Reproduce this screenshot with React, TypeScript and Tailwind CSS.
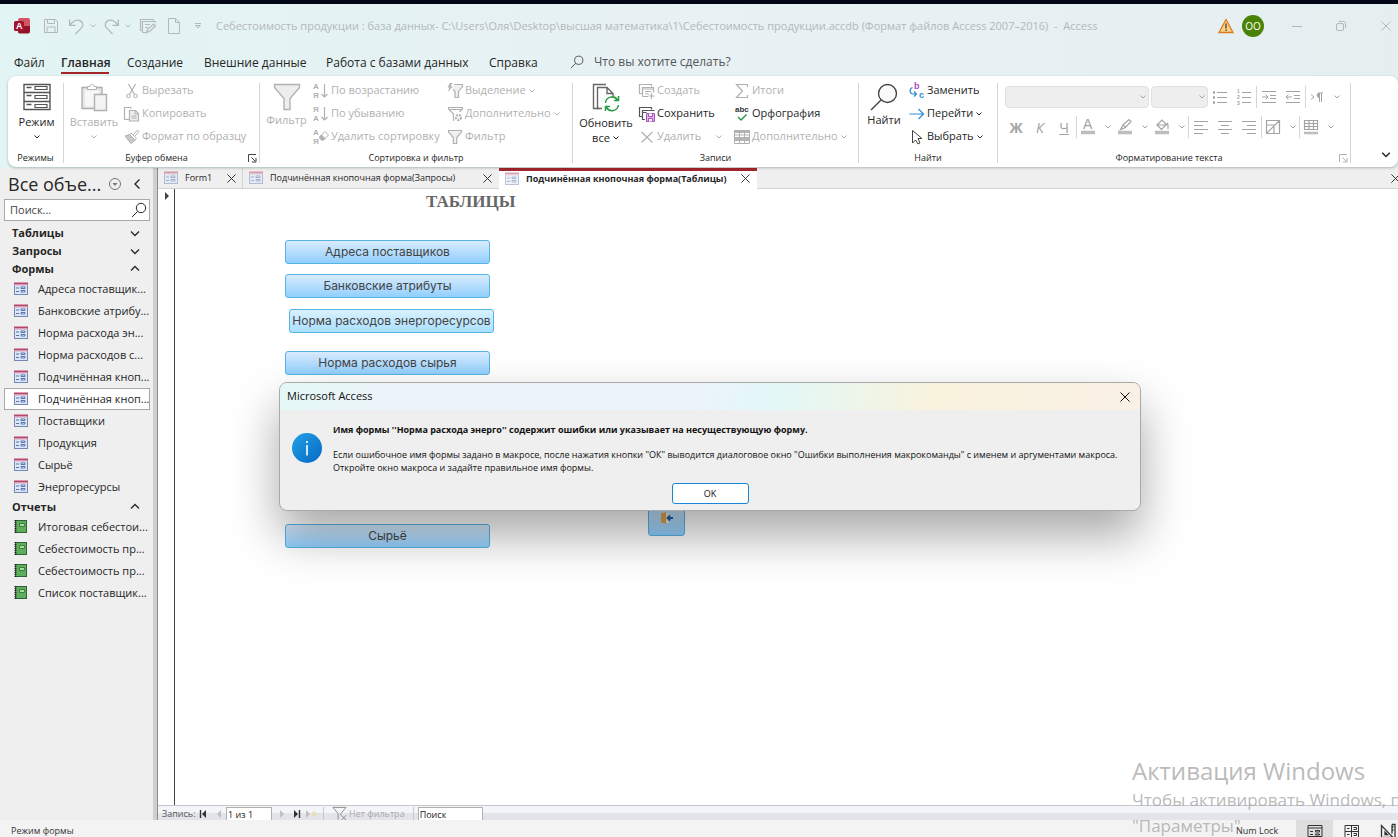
import type { ReactNode } from "react";

type IconProps = { children: ReactNode; box?: number; className?: string };

function Svg({ children, box = 16, className = "size-4" }: IconProps) {
  return (
    <svg
      viewBox={`0 0 ${box} ${box}`}
      fill="none"
      stroke="currentColor"
      strokeWidth={1}
      className={`shrink-0 overflow-visible font-['Liberation_Sans',sans-serif] ${className}`}
      aria-hidden="true"
    >
      {children}
    </svg>
  );
}

function Chevron({ className = "size-2" }: { className?: string }) {
  return (
    <Svg box={8} className={className}>
      <path d="M1.5 2.5 4 5l2.5-2.5" />
    </Svg>
  );
}

function Cross({ className = "size-3" }: { className?: string }) {
  return (
    <Svg box={12} className={className}>
      <path d="m1.5 1.5 9 9M10.5 1.5l-9 9" />
    </Svg>
  );
}

function Launcher({ className }: { className: string }) {
  return (
    <button type="button" aria-label="Параметры группы" className={className}>
      <Svg box={10} className="size-[10px]">
        <path d="M1.5 9V1.500H9M4.500 4.500l4 4M9 5v4H5" />
      </Svg>
    </button>
  );
}

function Magnifier({ className }: { className: string }) {
  return (
    <Svg className={className}>
      <circle cx="10" cy="6" r="4.700" />
      <path d="M6.600 9.400 1 15" />
    </Svg>
  );
}

function SortLetters({ top, bottom }: { top: string; bottom: string }) {
  return (
    <g fill="currentColor" stroke="none" fontSize="8" fontWeight="600">
      <text x="0" y="6">{top}</text>
      <text x="0" y="15">{bottom}</text>
    </g>
  );
}

const icons = {
  save: (
    <Svg>
      <path d="M1.500 1.500h11l2 2v11h-13zM4.500 1.500v4h7v-4M4 14.500V9h8v5.500" />
    </Svg>
  ),
  undo: (
    <Svg className="size-[17px]">
      <path d="M1.500 1.500v5.500H7M1.800 6.800C4 3.500 8 .800 11.500 2.500c3.600 2.300 2.800 5.500.5 7.500L7 15" strokeWidth="1.200" />
    </Svg>
  ),
  redo: (
    <Svg className="size-[17px]">
      <path d="M14.500 1.500v5.500H9M14.200 6.800C12 3.500 8 .800 4.500 2.500c-3.600 2.300-2.800 5.500-.5 7.500L9 15" strokeWidth="1.200" />
    </Svg>
  ),
  design: (
    <Svg>
      <path d="M2.500 12.500H.500v-11h13v1M2.500 14.500v-11h13v1M5 6.500h5M5 9.500h3M2.500 14.500H6M6.500 14.500l1-3 6-5.500 2 2-6 5.500z" strokeWidth="1.200" />
    </Svg>
  ),
  page: (
    <Svg>
      <path d="M2.500.500h7l4 4v11h-11zM9.500.500v4h4" />
    </Svg>
  ),
  cut: (
    <Svg>
      <path d="M4.500 1l6 10.500M11.500 1l-6 10.500" strokeWidth="1.200" />
      <circle cx="4.500" cy="13" r="1.800" />
      <circle cx="11.500" cy="13" r="1.800" />
    </Svg>
  ),
  copy: (
    <Svg>
      <path d="M5.500 13.500h-5v-12h6l1 1" strokeWidth="1.200" />
      <path d="M5.500 4.500h6l3 3v7.500h-9z" fill="#eee" strokeWidth="1.200" />
      <path d="M11 4.500V8h3.500M7.500 10h5M7.500 12h5" />
    </Svg>
  ),
  painter: (
    <Svg>
      <path d="m9.500 5.500 4-4.500L15 2.500l-4 4.500M7 4l5.500 5.500L11 11 5.500 5.500z" />
      <path d="M5.500 5.500 1 7l6 7.500L11 11z" fill="#c8c8c8" />
    </Svg>
  ),
  sortAsc: (
    <Svg>
      <SortLetters top="А" bottom="Я" />
      <path d="M11.500 1v13M8.500 11l3 3 3-3" strokeWidth="1.200" />
    </Svg>
  ),
  sortDesc: (
    <Svg>
      <SortLetters top="Я" bottom="А" />
      <path d="M11.500 1v13M8.500 11l3 3 3-3" strokeWidth="1.200" />
    </Svg>
  ),
  sortClear: (
    <Svg>
      <SortLetters top="А" bottom="Я" />
      <path d="m7 7.500 5-5 3.500 3.500-5 5H8.500L7 9.500z" />
      <path d="m8.500 6 3.500 3.500-1.500 1.500H8.500L7 9.500v-2z" fill="currentColor" />
    </Svg>
  ),
  selection: (
    <Svg>
      <path d="M7 1.500h8.500v2L11.500 8.500v6h-3.500v-6L6 6.500" fill="#f0f0f0" strokeWidth="1.200" />
      <path d="M3 0 .500 4.500h2L.500 9l5.500-5.500H3.500L5.500 0z" fill="currentColor" stroke="none" />
    </Svg>
  ),
  advanced: (
    <Svg>
      <path d="M7 14.500h-.500V8l-5-5V1.500h14V3l-3 3M1.500 3.500h14" strokeWidth="1.200" />
      <circle cx="11.500" cy="11.500" r="2.500" strokeWidth="2.200" strokeDasharray="2 1" />
    </Svg>
  ),
  funnelSmall: (
    <Svg>
      <path d="M1.500 1.500h13v1.600L9.700 8.500v6h-3.400v-6L1.500 3.100z" fill="#f0f0f0" strokeWidth="1.200" />
    </Svg>
  ),
  create: (
    <Svg>
      <path d="M3 10.500H.500v-9h12v2M3.500 13.500v-9h11v5M3.500 13.500H9M3.500 6h11M6 8.500h6M6 11h4M12.500 10v6M9.500 13h6" strokeWidth="1.200" />
    </Svg>
  ),
  store: (
    <Svg>
      <path d="M3 10.500H.500v-9h12v2M6 13.500H3.500v-9h12M3.500 6.500h4" strokeWidth="1.200" stroke="#555" />
      <path d="M7.500 7.500h8v8h-8z" fill="#e3b5ea" stroke="#a94fbb" />
      <path d="M9.500 7.500v3h4v-3M9.500 15.500v-3h4v3" fill="#fff" stroke="#a94fbb" />
    </Svg>
  ),
  remove: (
    <Svg>
      <path d="m2.500 3 11 10.500M13.500 3l-11 10.500" strokeWidth="1.200" />
    </Svg>
  ),
  totals: (
    <Svg>
      <path d="M13.500 4V1.500h-11L8.500 8l-6 6.500h11V12" strokeWidth="1.200" />
    </Svg>
  ),
  spelling: (
    <Svg>
      <text x="1" y="6" fontSize="8" fontWeight="600" fill="#333" stroke="none">abc</text>
      <path d="m4 11 3 3 5.500-5.500" strokeWidth="1.500" stroke="#2c9a45" />
    </Svg>
  ),
  more: (
    <Svg>
      <path d="M.500 1.500h15v13H.500z" />
      <path d="M.500 1.500h15v2H.500zM.500 8.500h15v3H.500z" fill="#b5b5b5" />
      <path d="M.500 6h15M5.500 1.500v13M10.500 1.500v13" />
    </Svg>
  ),
  replace: (
    <Svg>
      <g fontSize="9" fontWeight="600" stroke="none">
        <text x="5" y="6" fill="#a94fbb">b</text>
        <text x="10" y="15" fill="#2a8dd4">c</text>
      </g>
      <path d="M3.500 4.500C.300 5.500.300 10 3.500 11h4M5 8.500 7.500 11 5 13.500" strokeWidth="1.200" stroke="#2a8dd4" />
    </Svg>
  ),
  goTo: (
    <Svg className="size-4 text-[#2a8dd4]">
      <path d="M.500 8h14M9.500 3l5 5-5 5" strokeWidth="1.200" />
    </Svg>
  ),
  pick: (
    <Svg>
      <path d="M3.500 1.500v12.500l3-3 2.500 4 2-1-2-4.500h4z" stroke="#444" />
    </Svg>
  ),
};

type CommandProps = { icon: ReactNode; label: string; enabled?: boolean; arrow?: string };

function Command({ icon, label, enabled = false, arrow }: CommandProps) {
  return (
    <button
      type="button"
      disabled={!enabled}
      className={`flex h-[23px] items-center gap-[2px] whitespace-nowrap text-[11px] ${
        enabled ? "text-[#262626]" : "text-[#b1b1b1]"
      }`}
    >
      {icon}
      <span>{label}</span>
      {arrow && <Chevron className={arrow} />}
    </button>
  );
}

type GroupProps = { title: string; className: string; launcher?: string; children: ReactNode };

function Group({ title, className, launcher, children }: GroupProps) {
  return (
    <section className={`flex shrink-0 flex-col ${className}`}>
      <div className="flex h-[71px] items-start">{children}</div>
      <div className="flex h-4 items-center px-[2px] text-[9px] text-[#262626]">
        <h3 className="flex-1 whitespace-nowrap text-center">{title}</h3>
        {launcher && <Launcher className={launcher} />}
      </div>
    </section>
  );
}

function GroupLine() {
  return <div className="my-1 w-px shrink-0 bg-[#d6d6d6]" />;
}

function ToolLine() {
  return <div className="h-[22px] w-px shrink-0 bg-[#d6d6d6]" />;
}

function Tool({ label, children }: { label: string; children: ReactNode }) {
  return (
    <button type="button" disabled aria-label={label} className="flex h-6 w-6 items-center justify-center">
      {children}
    </button>
  );
}

function SplitTool({ label, children }: { label: string; children: ReactNode }) {
  return (
    <button type="button" disabled aria-label={label} className="flex h-6 w-[37px] items-center gap-1 pl-[3px]">
      {children}
      <Chevron className="ml-1 size-2" />
    </button>
  );
}

const menuTabs = [
  { label: "Файл", width: "w-[29px]" },
  { label: "Главная", width: "w-12", active: true },
  { label: "Создание", width: "w-[59px]" },
  { label: "Внешние данные", width: "w-[104px]" },
  { label: "Работа с базами данных", width: "w-[145px]" },
  { label: "Справка", width: "w-12" },
];

function TitleBar() {
  return (
    <header className="flex h-11 shrink-0 items-center text-[#b4b8ba]">
      <div className="flex w-[216px] shrink-0 items-center pl-[14px]">
        <Svg className="size-4">
          <rect x="4" y="0" width="12" height="15" rx="2" fill="#d0566a" stroke="none" />
          <path d="M4 8h12v5c0 1.500-.700 2.500-2 2.500H6c-1.300 0-2-.700-2-2z" fill="#94132b" stroke="none" />
          <rect x="0" y="3" width="10" height="10" rx="1.500" fill="#a4122c" stroke="none" />
          <text x="2" y="11" fontSize="9" fontWeight="700" fill="#fff" stroke="none">A</text>
        </Svg>
        <button type="button" aria-label="Сохранить" className="ml-[13px]">{icons.save}</button>
        <button type="button" aria-label="Отменить" className="ml-[9px] flex items-center gap-1">
          {icons.undo}
          <Chevron />
        </button>
        <button type="button" aria-label="Вернуть" className="ml-[6px] flex items-center gap-1">
          {icons.redo}
          <Chevron />
        </button>
        <button type="button" aria-label="Режим макета" className="ml-2">{icons.design}</button>
        <button type="button" aria-label="Создать" className="ml-[10px]">{icons.page}</button>
        <button type="button" aria-label="Настройка панели" className="ml-3">
          <Svg box={8} className="size-2">
            <path d="M1 1.500h6M1.500 3.500 4 6l2.500-2.500z" />
          </Svg>
        </button>
      </div>
      <h1 className="flex-1 truncate text-[11px]">
        Себестоимость продукции : база данных- C:\Users\Оля\Desktop\высшая математика\1\Себестоимость
        продукции.accdb (Формат файлов Access 2007–2016) &nbsp;-&nbsp; Access
      </h1>
      <Svg className="size-4">
        <path d="M8 1.500 15 14.500H1z" fill="#fbd08b" stroke="#e07b1a" strokeWidth="1.300" />
        <path d="M8 5.500v5M8 11.500v1.500" stroke="#333" strokeWidth="1.200" />
      </Svg>
      <span className="ml-2 flex size-[22px] items-center justify-center rounded-full bg-[#498205] text-[10px] text-white">
        OO
      </span>
      <div className="ml-7 flex items-center gap-[34px] pr-[6px]">
        <button type="button" aria-label="Свернуть">
          <Svg box={10} className="size-[10px]"><path d="M0 5.500h10" /></Svg>
        </button>
        <button type="button" aria-label="Свернуть в окно">
          <Svg box={10} className="size-[10px]">
            <rect x=".5" y="2.500" width="7" height="7" rx="1.500" />
            <path d="M3 .500h4.500a2 2 0 0 1 2 2V7" />
          </Svg>
        </button>
        <button type="button" aria-label="Закрыть">
          <Cross />
        </button>
      </div>
    </header>
  );
}

function MenuBar() {
  return (
    <nav className="flex h-7 shrink-0 items-center pl-[14px] text-[12px] text-[#262626]">
      <div className="flex gap-[18px]">
        {menuTabs.map((tab) => (
          <a
            key={tab.label}
            href="#"
            className={`flex h-6 whitespace-nowrap border-b-2 pt-[2px] leading-[22px] ${tab.width} ${
              tab.active ? "border-[#a4262c] font-semibold" : "border-transparent"
            }`}
          >
            {tab.label}
          </a>
        ))}
      </div>
      <label className="ml-[33px] flex flex-1 items-center gap-[10px] text-[#444]">
        <Magnifier className="size-[14px]" />
        <input
          type="text"
          aria-label="Помощник"
          placeholder="Что вы хотите сделать?"
          className="w-60 bg-transparent outline-none placeholder:text-[#555]"
        />
      </label>
    </nav>
  );
}

function Ribbon() {
  return (
    <div className="relative z-10 mb-px ml-2 flex h-[91px] shrink-0 overflow-hidden rounded-lg bg-white pt-[3px] shadow-[0_1px_3px_rgba(0,0,0,0.25)]">
      <Group title="Режимы" className="w-[55px]">
        <button type="button" className="flex w-[57px] shrink-0 flex-col items-center pt-1 text-[11px] leading-[22px] text-[#262626]">
          <Svg box={28} className="size-7 text-[#555]">
            <path d="M1 1.500h26v25H1zM1 9.500h26M1 18.500h26M3.500 4.500h5M3.500 12.500h5M3.500 21.500h5" strokeWidth="1.400" />
            <path d="M12 3.500h12v3H12zM12 12.500h12v3H12zM12 21.500h12v3H12z" strokeWidth="1.200" />
          </Svg>
          Режим
          <Chevron />
        </button>
      </Group>
      <GroupLine />
      <Group title="Буфер обмена" className="w-[195px]" launcher="text-[#444]">
        <button type="button" disabled className="flex w-[60px] flex-col items-center pt-1 text-[11px] leading-[22px] text-[#b1b1b1]">
          <Svg box={28} className="size-7">
            <path d="M2 4.500h20v21H2z" fill="#e6e6e6" strokeWidth="1.400" />
            <path d="M5 7.500h14v16H5z" fill="#f7f7f7" stroke="none" />
            <path d="M7.500 6.500v-3h2.500c.500-3 3.500-3 4 0h2.500v3z" fill="#fff" />
            <path d="M14.500 11.500h12v16h-12z" fill="#f3f3f3" strokeWidth="1.400" />
          </Svg>
          Вставить
          <Chevron />
        </button>
        <div className="flex flex-col">
          <Command icon={icons.cut} label="Вырезать" />
          <Command icon={icons.copy} label="Копировать" />
          <Command icon={icons.painter} label="Формат по образцу" />
        </div>
      </Group>
      <GroupLine />
      <Group title="Сортировка и фильтр" className="w-[312px]">
        <button type="button" disabled className="flex w-[53px] flex-col items-center pt-1 text-[11px] leading-[18px] text-[#b1b1b1]">
          <Svg box={28} className="size-7">
            <path d="M1.500 1.500h25v3L17 15.500v11h-6v-11L1.500 4.500z" fill="#eee" strokeWidth="1.400" />
          </Svg>
          Фильтр
        </button>
        <div className="flex w-[134px] flex-col">
          <Command icon={icons.sortAsc} label="По возрастанию" />
          <Command icon={icons.sortDesc} label="По убыванию" />
          <Command icon={icons.sortClear} label="Удалить сортировку" />
        </div>
        <div className="flex flex-col">
          <Command icon={icons.selection} label="Выделение" arrow="size-2" />
          <Command icon={icons.advanced} label="Дополнительно" arrow="size-2" />
          <Command icon={icons.funnelSmall} label="Фильтр" />
        </div>
      </Group>
      <GroupLine />
      <Group title="Записи" className="w-[285px]">
        <button type="button" className="flex w-[66px] flex-col items-center pt-1 text-[11px] leading-[15px] text-[#262626]">
          <Svg box={28} className="mb-1 size-7 text-[#666]">
            <path d="M7 25.500H1.500V1.500H14" strokeWidth="1.400" />
            <path d="M10 25.500H5.500v-21H15l6 6V13M15 4.500v6h6" strokeWidth="1.400" />
            <path d="M13.500 20a6.500 6.500 0 0 1 12-3M26.500 13v4.500H22M26.500 22a6.500 6.500 0 0 1-12 2.500M13.500 28v-4.500H18" stroke="#2c9a45" strokeWidth="1.500" />
          </Svg>
          Обновить
          <span className="flex items-center gap-[2px]">
            все <Chevron />
          </span>
        </button>
        <div className="flex w-[95px] flex-col">
          <Command icon={icons.create} label="Создать" />
          <Command icon={icons.store} label="Сохранить" enabled />
          <Command icon={icons.remove} label="Удалить" arrow="ml-3 size-2" />
        </div>
        <div className="flex flex-col">
          <Command icon={icons.totals} label="Итоги" />
          <Command icon={icons.spelling} label="Орфография" enabled />
          <Command icon={icons.more} label="Дополнительно" arrow="size-2" />
        </div>
      </Group>
      <GroupLine />
      <Group title="Найти" className="w-[138px]">
        <button type="button" className="flex w-[50px] flex-col items-center pt-1 text-[11px] leading-[18px] text-[#262626]">
          <Svg box={28} className="size-7 text-[#444]">
            <circle cx="17.500" cy="10.500" r="9" fill="#fafafa" strokeWidth="1.400" />
            <path d="M11 17 1 27" strokeWidth="1.400" />
          </Svg>
          Найти
        </button>
        <div className="flex flex-col">
          <Command icon={icons.replace} label="Заменить" enabled />
          <Command icon={icons.goTo} label="Перейти" enabled arrow="size-2" />
          <Command icon={icons.pick} label="Выбрать" enabled arrow="size-2" />
        </div>
      </Group>
      <GroupLine />
      <Group title="Форматирование текста" className="w-[352px]" launcher="text-[#b1b1b1]">
        <div className="flex flex-col gap-[6px] pl-[6px] pt-[6px] text-[#a3a3a3]">
          <div className="flex h-6 items-center pl-px">
            <div className="relative mr-[2px]">
              <select disabled aria-label="Шрифт" className="block h-[22px] w-[144px] appearance-none rounded border border-[#e0e0e0] bg-[#eeeeee]" />
              <Chevron className="absolute right-[2px] top-[7px] size-2" />
            </div>
            <div className="relative">
              <select disabled aria-label="Размер шрифта" className="block h-[22px] w-[57px] appearance-none rounded border border-[#e0e0e0] bg-[#eeeeee]" />
              <Chevron className="absolute right-[2px] top-[7px] size-2" />
            </div>
            <Tool label="Маркеры">
              <Svg><path d="M5 3.500h10M5 8.500h10M5 13.500h10" /><path d="M1 3.500h2M1 8.500h2M1 13.500h2" strokeWidth="2.500" /></Svg>
            </Tool>
            <Tool label="Нумерация">
              <Svg>
                <path d="M6 3.500h9M6 8.500h9M6 13.500h9" />
                <g fill="currentColor" stroke="none" fontSize="5" fontWeight="600">
                  <text x="1" y="4">1</text>
                  <text x="1" y="10">2</text>
                  <text x="1" y="16">3</text>
                </g>
              </Svg>
            </Tool>
            <ToolLine />
            <Tool label="Увеличить отступ">
              <Svg><path d="M1 2.500h14M9 6.500h6M9 9.500h6M1 13.500h14M1 8h6M4.500 5.500 7 8l-2.500 2.500" /></Svg>
            </Tool>
            <Tool label="Уменьшить отступ">
              <Svg><path d="M1 2.500h14M9 6.500h6M9 9.500h6M1 13.500h14M1 8h6M3.500 5.500 1 8l2.500 2.500" /></Svg>
            </Tool>
            <ToolLine />
            <SplitTool label="Направление текста">
              <Svg>
                <path d="m2 5.500 3 2.500-3 2.500M10.500 4v9M12.500 4v9M14 4H9.500" />
                <path d="M10 4a2.300 2.300 0 0 0 0 4.500z" fill="currentColor" />
              </Svg>
            </SplitTool>
          </div>
          <div className="flex h-6 items-center text-[14px]">
            <Tool label="Полужирный"><b>Ж</b></Tool>
            <Tool label="Курсив"><i>К</i></Tool>
            <Tool label="Подчеркнутый"><u>Ч</u></Tool>
            <ToolLine />
            <SplitTool label="Цвет текста">
              <Svg><text x="3" y="10" fontSize="14" fill="currentColor" stroke="none">А</text><path d="M1 13.500h14" strokeWidth="3.500" stroke="#bdbdbd" /></Svg>
            </SplitTool>
            <SplitTool label="Цвет выделения">
              <Svg><path d="m6 6 6-5.500 2 2-5.500 6zM6 6l-2.500 4.500L8.500 8.500" strokeWidth="1.200" /><path d="M1 13.500h14" strokeWidth="3.500" stroke="#bdbdbd" /></Svg>
            </SplitTool>
            <SplitTool label="Цвет фона">
              <Svg><path d="m3 6 5-5 4.500 4.500-5 5zM3.500 6h9M13 4c1.500 1.500 1 3 1 6" strokeWidth="1.200" /><path d="M1 13.500h14" strokeWidth="3.500" stroke="#bdbdbd" /></Svg>
            </SplitTool>
            <ToolLine />
            <Tool label="По левому краю">
              <Svg><path d="M1 2.500h14M1 6.500h9M1 10.500h14M1 14.500h9" /></Svg>
            </Tool>
            <Tool label="По центру">
              <Svg><path d="M1 2.500h14M4 6.500h8M1 10.500h14M4 14.500h8" /></Svg>
            </Tool>
            <Tool label="По правому краю">
              <Svg><path d="M1 2.500h14M6 6.500h9M1 10.500h14M6 14.500h9" /></Svg>
            </Tool>
            <ToolLine />
            <SplitTool label="Цвет строк">
              <Svg><path d="M1.500 1.500h13v13h-13zM1.500 14.500l13-13M1.500 6h9M9 8v6.500" strokeWidth="1.200" /></Svg>
            </SplitTool>
            <ToolLine />
            <SplitTool label="Сетка">
              <Svg><path d="M1.500 1.500h13v9h-13zM1.500 4.500h13M1.500 7.500h13M6 1.500v9M10.500 1.500v9" strokeWidth="1.200" /><path d="M1 14h14" strokeWidth="2.500" stroke="#bdbdbd" /></Svg>
            </SplitTool>
          </div>
        </div>
      </Group>
      <GroupLine />
      <div className="flex flex-1 items-end justify-end pb-[6px] pr-[6px]">
        <button type="button" aria-label="Свернуть ленту" className="text-[#262626]">
          <Chevron className="size-3" />
        </button>
      </div>
    </div>
  );
}

function FormIcon({ className = "size-[14px]" }: { className?: string }) {
  return (
    <Svg box={14} className={className}>
      <rect x=".5" y="1.500" width="13" height="11" fill="#dbe6f8" stroke="#7488b4" />
      <path d="M0 1.500h14" stroke="#b8456c" strokeWidth="2" />
      <path d="M0 3h14" stroke="#dfa3b8" />
      <path d="M2 6h3M2 9.500h3" stroke="#5a73a8" />
      <path d="M7 5h4v1.500H7zM7 8.500h4V10H7z" fill="#fff" stroke="#5a73a8" />
    </Svg>
  );
}

function ReportIcon() {
  return (
    <Svg box={14} className="size-[14px]">
      <rect x="1.500" y=".5" width="11" height="12" fill="#5fae5c" stroke="#2f6238" />
      <path d="M5.500 3.500h5v3h-5z" fill="#a9dba0" stroke="#3c7e3f" />
      <path d="M1.500 0v13" stroke="#222" strokeWidth="2" strokeDasharray="1 1" />
    </Svg>
  );
}

const navGroups = [
  { title: "Таблицы", open: false, kind: "table", items: [] },
  { title: "Запросы", open: false, kind: "query", items: [] },
  {
    title: "Формы",
    open: true,
    kind: "form",
    items: [
      "Адреса поставщик...",
      "Банковские атрибу...",
      "Норма расхода эн...",
      "Норма расходов с...",
      "Подчинённая кноп...",
      "Подчинённая кноп...",
      "Поставщики",
      "Продукция",
      "Сырьё",
      "Энергоресурсы",
    ],
  },
  {
    title: "Отчеты",
    open: true,
    kind: "report",
    items: ["Итоговая себестои...", "Себестоимость пр...", "Себестоимость пр...", "Список поставщик..."],
  },
];

const selectedForm = 5;

function NavigationPane() {
  return (
    <aside className="flex w-[153px] shrink-0 flex-col bg-[#efefef] text-[#262626]">
      <div className="flex h-[31px] items-center pl-2">
        <h2 className="w-[101px] whitespace-nowrap text-[18px] leading-6">Все объе...</h2>
        <button type="button" aria-label="Меню" className="text-[#777]">
          <Svg box={12} className="size-3">
            <circle cx="6" cy="6" r="5.500" />
            <path d="M3.500 5h5L6 8z" fill="currentColor" stroke="none" />
          </Svg>
        </button>
        <button type="button" aria-label="Скрыть область" className="ml-[10px]">
          <Svg box={12} className="size-3">
            <path d="M8.500 1.500 4 6l4.500 4.500" strokeWidth="1.400" />
          </Svg>
        </button>
      </div>
      <label className="ml-1 mr-[3px] mb-[3px] flex h-[22px] shrink-0 items-center border border-[#a8a8a8] bg-white pl-[5px] pr-[2px]">
        <input
          type="text"
          aria-label="Поиск объектов"
          placeholder="Поиск..."
          className="min-w-0 flex-1 text-[11px] outline-none placeholder:text-[#444]"
        />
        <Magnifier className="size-4" />
      </label>
      {navGroups.map((group) => (
        <section key={group.title}>
          <button type="button" className="flex h-[18px] w-full items-center justify-between pl-3 pr-3 text-[11px] font-bold">
            {group.title}
            <Svg box={12} className="size-3">
              <path d={group.open ? "M2 7.500 6 3.500l4 4" : "m2 4.500 4 4 4-4"} strokeWidth="1.300" />
            </Svg>
          </button>
          {group.items.map((item, i) => (
            <a
              key={i}
              href="#"
              className={`ml-1 mr-[3px] flex h-[22px] items-center gap-[10px] whitespace-nowrap border pl-[9px] text-[11px] ${
                group.kind === "form" && i === selectedForm ? "border-[#a8a8a8] bg-white" : "border-transparent"
              }`}
            >
              {group.kind === "form" ? <FormIcon /> : <ReportIcon />}
              {item}
            </a>
          ))}
        </section>
      ))}
    </aside>
  );
}

function DocumentTabs() {
  return (
    <div className="flex h-[21px] shrink-0 items-stretch whitespace-nowrap border-b border-[#d4d4d4] bg-[#efefef] text-[9px] text-[#262626]">
      <div className="flex w-[85px] items-center border-r border-[#d4d4d4] pl-[6px] pr-[5px]">
        <FormIcon className="size-[14px] opacity-50" />
        <span className="flex-1 pl-[7px]">Form1</span>
        <button type="button" aria-label="Закрыть вкладку"><Cross className="size-[11px]" /></button>
      </div>
      <div className="flex w-[256px] items-center pl-[6px] pr-[6px]">
        <FormIcon className="size-[14px] opacity-50" />
        <span className="flex-1 pl-[7px]">Подчинённая кнопочная форма(Запросы)</span>
        <button type="button" aria-label="Закрыть вкладку"><Cross className="size-[11px]" /></button>
      </div>
      <div className="-mb-px flex w-[258px] items-center border-t-[3px] border-[#a4262c] bg-white pb-[3px] pl-[6px] pr-[6px]">
        <FormIcon className="size-[14px] opacity-50" />
        <span className="flex-1 pl-[7px] font-bold">Подчинённая кнопочная форма(Таблицы)</span>
        <button type="button" aria-label="Закрыть вкладку"><Cross className="size-[11px]" /></button>
      </div>
      <button type="button" aria-label="Закрыть все" className="-mr-[3px] ml-auto">
        <Cross className="size-[11px]" />
      </button>
    </div>
  );
}

const formButtons = [
  { label: "Адреса поставщиков", className: "mt-7" },
  { label: "Банковские атрибуты", className: "mt-[10px]" },
  { label: "Норма расходов энергоресурсов", className: "ml-1 mt-[11px]", focused: true },
  { label: "Норма расходов сырья", className: "mt-[18px]" },
];

const formButton =
  "h-6 w-[205px] shrink-0 whitespace-nowrap rounded-[3px] border border-[#56b4e4] text-[12px] text-[#444] font-['Inter',sans-serif]";

function FormView() {
  return (
    <div className="flex min-h-0 flex-1 bg-white">
      <div className="w-[17px] shrink-0 border-r border-[#444] pl-[6px] pt-[2px] text-[#444]">
        <Svg box={10} className="h-[10px] w-[10px]">
          <path d="M1 1v8l4-4z" fill="currentColor" stroke="none" />
        </Svg>
      </div>
      <div className="flex min-w-0 flex-1 flex-col items-start overflow-hidden pl-[110px]">
        <h2 className="ml-[141px] mt-[3px] font-['Liberation_Serif',serif] text-[17px] font-bold leading-5 text-[#666]">
          ТАБЛИЦЫ
        </h2>
        {formButtons.map((b) => (
          <button
            key={b.label}
            type="button"
            className={`${formButton} ${b.className} ${
              b.focused ? "bg-linear-to-b from-[#d9f1fd] to-[#a9e0ff]" : "bg-linear-to-b from-[#d9ebfd] to-[#90cffd]"
            }`}
          >
            {b.label}
          </button>
        ))}
        <div className="mt-[125px] flex items-start">
          <button type="button" className={`${formButton} mt-6 bg-linear-to-b from-[#d9ebfd] to-[#90cffd]`}>
            Сырьё
          </button>
          <button
            type="button"
            aria-label="Закрыть форму"
            className="ml-[158px] flex h-9 w-[37px] items-center justify-center rounded-[3px] border border-[#56b4e4] bg-linear-to-b from-[#d9ebfd] to-[#90cffd]"
          >
            <Svg box={14} className="size-[14px]">
              <path d="M1 2.500 6 1v12l-5-1.500z" fill="#e0a44c" stroke="none" />
              <path d="M6 2h3v10H6z" fill="#e8e8e8" stroke="none" />
              <path d="M7.500 7H13M10 4.500 7.500 7l2.500 2.500" stroke="#2b5f9e" strokeWidth="1.800" />
            </Svg>
          </button>
        </div>
      </div>
    </div>
  );
}

function RecordBar() {
  return (
    <div className="flex h-[15px] shrink-0 items-center border-t border-[#c4c7cc] bg-linear-to-b from-[#f4f5f8] from-50% to-[#e2e4e9] to-50% pl-1 pt-px text-[9px] text-[#555]">
      <span className="w-[37px]">Запись:</span>
      <button type="button" aria-label="Первая запись" className="text-[#333]">
        <Svg box={8} className="size-2"><path d="M1.500 0v8" strokeWidth="1.400" /><path d="M7 0v8L3 4z" fill="currentColor" stroke="none" /></Svg>
      </button>
      <button type="button" disabled aria-label="Предыдущая запись" className="ml-2 text-[#c0c0c0]">
        <Svg box={8} className="size-2"><path d="M6 0v8L2 4z" fill="currentColor" stroke="none" /></Svg>
      </button>
      <input
        type="text"
        aria-label="Номер записи"
        defaultValue="1 из 1"
        className="ml-[3px] h-full w-[46px] border border-b-0 border-[#b0b0b0] bg-white px-px text-[9px] text-[#222]"
      />
      <button type="button" disabled aria-label="Следующая запись" className="ml-[6px] text-[#c0c0c0]">
        <Svg box={8} className="size-2"><path d="M2 0v8l4-4z" fill="currentColor" stroke="none" /></Svg>
      </button>
      <button type="button" aria-label="Последняя запись" className="ml-[7px] text-[#333]">
        <Svg box={8} className="size-2"><path d="M6.500 0v8" strokeWidth="1.400" /><path d="M1 0v8l4-4z" fill="currentColor" stroke="none" /></Svg>
      </button>
      <button type="button" disabled aria-label="Новая запись" className="ml-1 text-[#c0c0c0]">
        <Svg box={12} className="size-3">
          <path d="M1 2v8l4-4z" fill="currentColor" stroke="none" />
          <path d="M6 6h6M9 3v6M7 4l4 4M11 4 7 8" stroke="#ecdcb4" />
        </Svg>
      </button>
      <div className="ml-[6px] h-full w-px bg-[#c4c7cc]" />
      <button type="button" disabled className="ml-2 flex items-center gap-[2px] whitespace-nowrap text-[#aaa]">
        <Svg className="size-[15px] text-[#888]">
          <path d="M1 1.500h14L9.500 8v2M1 1.500 6.500 8v6.500M10 10l5 5M15 10l-5 5" />
        </Svg>
        Нет фильтра
      </button>
      <div className="ml-2 h-full w-px bg-[#c4c7cc]" />
      <input
        type="text"
        aria-label="Поиск по записям"
        defaultValue="Поиск"
        className="ml-1 h-full w-[65px] border border-b-0 border-[#b0b0b0] bg-white px-px text-[9px] text-[#222]"
      />
    </div>
  );
}

function StatusBar() {
  return (
    <footer className="flex h-[17px] shrink-0 items-start overflow-hidden bg-[#f3f3f3] pl-[11px] text-[9px] leading-[21px] text-[#333]">
      <span className="flex-1">Режим формы</span>
      <span className="w-[60px] whitespace-nowrap">Num Lock</span>
      <button type="button" aria-label="Режим формы" className="flex h-[21px] w-[37px] items-center justify-center bg-[#dedede]">
        <Svg className="size-4">
          <path d="M1 2.500h14v11H1zM1 5h14M3 8.500h3M3 11.500h3M8.500 7.500h4v1.500h-4zM8.500 11h4v1h-4z" />
        </Svg>
      </button>
      <button type="button" aria-label="Режим макета" className="flex h-[21px] w-[37px] items-center justify-center">
        <Svg className="size-4">
          <path d="M1 2.500h13.500v12H1zM7.500 2.500v12M1 8.500h13.500M3 5.500h2.500M9.500 4.500h3v2h-3M3 11.500h2.500M9.500 10.500h3v2h-3" />
        </Svg>
      </button>
      <button type="button" aria-label="Конструктор" className="flex h-[21px] w-7 items-center justify-end pr-[2px]">
        <Svg className="size-4">
          <path d="M1.500 15V2.500L13 14.500H3M12 1.500h3v13M12 1.500v9M5 11.500V9l2.500 2.500zM12 4h1.500M12 7h1.500" strokeWidth="1.300" />
        </Svg>
      </button>
    </footer>
  );
}

function ErrorDialog() {
  return (
    <div
      role="alertdialog"
      aria-labelledby="dialog-title"
      className="absolute left-[279px] top-[378px] z-20 w-[862px] overflow-hidden rounded-lg border border-[#a9a9a9] bg-[#efefef] text-[#111] shadow-[0_24px_48px_rgba(0,0,0,0.35)]"
    >
      <div className="flex h-[27px] items-center justify-between bg-linear-[100deg,#e3f9f6_0%,#ecf4f9_12%,#ecf3fb_48%,#e2f8f7_58%,#f9f2dd_76%,#faf1e6_100%] pl-[7px] pr-[9px]">
        <h2 id="dialog-title" className="text-[11px]">Microsoft Access</h2>
        <button type="button" aria-label="Закрыть"><Cross /></button>
      </div>
      <div className="flex pl-3">
        <Svg box={30} className="mt-[23px] size-[30px]">
          <defs>
            <linearGradient id="info" x1="0" y1="0" x2="1" y2="1">
              <stop offset="0" stopColor="#22a0e6" />
              <stop offset="1" stopColor="#0669c4" />
            </linearGradient>
          </defs>
          <circle cx="15" cy="15" r="15" fill="url(#info)" stroke="none" />
          <path d="M15 12v10.500M15 8v2" stroke="#fff" strokeWidth="1.600" />
        </Svg>
        <div className="pl-[11px] pt-[13px] text-[9px] leading-[13px]">
          <p className="whitespace-nowrap font-bold">
            Имя формы ''Норма расхода энерго'' содержит ошибки или указывает на несуществующую форму.
          </p>
          <p className="mt-3 whitespace-nowrap">
            Если ошибочное имя формы задано в макросе, после нажатия кнопки "ОК" выводится диалоговое окно
            "Ошибки выполнения макрокоманды" с именем и аргументами макроса.
          </p>
          <p>Откройте окно макроса и задайте правильное имя формы.</p>
        </div>
      </div>
      <div className="flex justify-center pb-[6px] pt-[9px]">
        <button type="button" className="h-[21px] w-[77px] rounded-[3px] border border-[#1a86d8] bg-white text-[9px]">
          OK
        </button>
      </div>
    </div>
  );
}

function ActivationNotice() {
  return (
    <div className="pointer-events-none absolute left-[1132px] top-[751px] whitespace-nowrap text-[#a8a8a8]/80">
      <p className="text-[24px] leading-8">Активация Windows</p>
      <p className="text-[17px] leading-[26px]">
        Чтобы активировать Windows, п
        <br />
        "Параметры"
      </p>
    </div>
  );
}

export default function App() {
  return (
    <div className="relative flex h-screen flex-col overflow-hidden border-t-4 border-[#020617] bg-linear-to-r from-[#e2f4f3] via-[#e8f1f4] to-[#e5eff0] font-['Open_Sans','Noto_Sans',sans-serif]">
      <TitleBar />
      <MenuBar />
      <Ribbon />
      <div className="flex min-h-0 flex-1">
        <NavigationPane />
        <div className="w-[5px] shrink-0 border-r border-[#8c8c8c] bg-[#cfcfcf]" />
        <main className="flex min-w-0 flex-1 flex-col">
          <DocumentTabs />
          <FormView />
          <RecordBar />
        </main>
      </div>
      <StatusBar />
      <ErrorDialog />
      <ActivationNotice />
    </div>
  );
}
